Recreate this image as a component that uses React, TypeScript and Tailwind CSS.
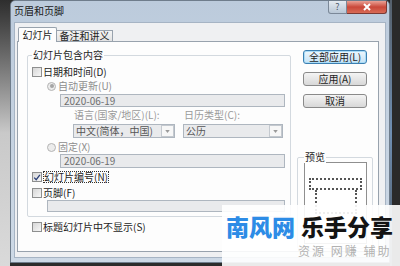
import React from "react";

const font = { fontFamily: '"Noto Sans CJK SC", "Liberation Sans", sans-serif' };

const CheckBox = ({ checked }: { checked?: boolean }) => (
  <span className="w-[10px] h-[10px] shrink-0 border border-[#8e8f8f] bg-gradient-to-br from-[#d6d6d6] to-[#f7f7f7] flex items-center justify-center">
    {checked && (
      <svg viewBox="0 0 10 10" className="w-[9px] h-[9px]">
        <path d="M1.5 5.2 L4 7.8 L8.6 1.8" fill="none" stroke="#2a3f77" strokeWidth="1.6" />
      </svg>
    )}
  </span>
);

const Radio = ({ on }: { on?: boolean }) => (
  <span className="w-[9px] h-[9px] shrink-0 rounded-full border border-[#b4b4b4] bg-[#ececec] flex items-center justify-center">
    {on && <span className="w-[4px] h-[4px] rounded-full bg-[#a5a5a5]" />}
  </span>
);

const Arrow = () => (
  <span className="w-[13px] h-[12px] border border-[#c4c9cf] bg-[#f7f7f7] flex items-center justify-center">
    <svg viewBox="0 0 6 4" className="w-[5px] h-[3px]">
      <path d="M0 0 L6 0 L3 4 Z" fill="#9a9a9a" />
    </svg>
  </span>
);

export default function App() {
  return (
    <div className="relative w-[400px] h-[266px] overflow-hidden flex bg-[#2c2c2c] text-[10px] leading-[12px] text-[#1e1e1e]" style={font}>
      {/* desk left */}
      <div className="w-[10px] h-full bg-gradient-to-b from-[#2e2e2e] via-[#c9c9c9] to-[#dadada]" />

      {/* window */}
      <div className="w-[380px] h-[263px] flex flex-col rounded-t-[5px] bg-gradient-to-b from-[#bccbdc] to-[#cdd9e6] border border-[#6f7d8c]">
        {/* title bar */}
        <div className="h-[21px] flex items-start shrink-0">
          <span className="pl-[3px] pt-[4px] text-[#1a1a1a]">页眉和页脚</span>
          <div className="flex-1" />
          <div className="w-[19px] h-[13px] flex items-center justify-center rounded-bl-[3px] border border-t-0 border-[#7b8898] bg-gradient-to-b from-[#e4eaf1] to-[#b9c7d6] text-[9px] text-[#4c5a6a]">?</div>
          <div className="w-[40px] h-[13px] mr-[2px] flex items-center justify-center rounded-br-[3px] border border-t-0 border-l-0 border-[#7b3a34] bg-gradient-to-b from-[#e9a196] via-[#c9473a] to-[#d86a55]">
            <svg viewBox="0 0 10 8" className="w-[10px] h-[8px]">
              <path d="M2 1 L8 7 M8 1 L2 7" stroke="#fff" strokeWidth="2" />
            </svg>
          </div>
        </div>

        {/* dialog body */}
        <div className="flex-1 mx-[3px] mb-[4px] bg-[#eff0f2] border border-[#a6b4c4] flex flex-col">
          {/* tabs */}
          <div className="h-[15px] mt-[4px] ml-[3px] -mb-[1px] flex items-end">
            <div className="relative z-10 w-[39px] h-[15px] bg-[#fdfdfd] border border-b-0 border-[#98a2ad] rounded-t-[2px] flex items-center justify-center">
              幻灯片
            </div>
            <div className="w-[56px] h-[11px] mb-[1px] bg-gradient-to-b from-[#f4f4f4] to-[#e2e2e2] border border-b-0 border-l-0 border-[#98a2ad] flex items-center justify-center">
              备注和讲义
            </div>
          </div>

          {/* panel */}
          <div className="ml-[2px] w-[362px] h-[211px] bg-[#fdfdfd] border border-[#98a2ad] flex">
            <div className="flex flex-col">
              {/* group box */}
              <div className="relative ml-[9px] mt-[13px] w-[264px] h-[162px] border border-[#d3d9df] rounded-[2px] flex flex-col">
                <span className="absolute -top-[7px] left-[4px] px-[1px] bg-[#fdfdfd]">幻灯片包含内容</span>

                <div className="mt-[10px] h-[12px] pl-[4px] flex items-center gap-[1px]">
                  <CheckBox />
                  <span>日期和时间(D)</span>
                </div>
                <div className="mt-[2px] h-[12px] pl-[19px] flex items-center gap-[2px] text-[#8d8d8d]">
                  <Radio on />
                  <span>自动更新(U)</span>
                </div>
                <div className="mt-[2px] ml-[32px] w-[225px] h-[13px] bg-[#e9eaec] border border-[#aeb6bf] flex items-center pl-[3px] text-[#6f6f6f]">
                  2020-06-19
                </div>
                <div className="mt-[2px] h-[12px] pl-[46px] flex items-center text-[#9a9a9a]">
                  <span className="w-[110px]">语言(国家/地区)(L):</span>
                  <span>日历类型(C):</span>
                </div>
                <div className="mt-[3px] ml-[45px] h-[14px] flex gap-[8px]">
                  <div className="w-[102px] h-[14px] bg-[#e9eaec] border border-[#aeb6bf] flex items-center justify-between pl-[2px] text-[#555]">
                    <span>中文(简体，中国)</span>
                    <Arrow />
                  </div>
                  <div className="w-[100px] h-[14px] bg-[#e9eaec] border border-[#aeb6bf] flex items-center justify-between pl-[2px] text-[#555]">
                    <span>公历</span>
                    <Arrow />
                  </div>
                </div>
                <div className="mt-[3px] h-[12px] pl-[19px] flex items-center gap-[2px] text-[#8d8d8d]">
                  <Radio />
                  <span>固定(X)</span>
                </div>
                <div className="mt-[1px] ml-[32px] w-[225px] h-[14px] bg-[#e9eaec] border border-[#aeb6bf] flex items-center pl-[3px] text-[#6f6f6f]">
                  2020-06-19
                </div>
                <div className="mt-[3px] h-[12px] pl-[4px] flex items-center gap-[1px]">
                  <CheckBox checked />
                  <span className="border border-dotted border-[#333] leading-[10px]">幻灯片编号(N)</span>
                </div>
                <div className="mt-[4px] h-[12px] pl-[4px] flex items-center gap-[1px]">
                  <CheckBox />
                  <span>页脚(F)</span>
                </div>
                <div className="mt-[1px] ml-[19px] w-[238px] h-[12px] bg-[#e9eaec] border border-[#aeb6bf]" />
              </div>

              <div className="mt-[4px] ml-[14px] h-[12px] flex items-center gap-[1px]">
                <CheckBox />
                <span>标题幻灯片中不显示(S)</span>
              </div>
            </div>

            {/* right column */}
            <div className="ml-[6px] w-[76px] flex flex-col">
              <div className="mt-[8px] ml-[6px] w-[64px] h-[14px] rounded-[3px] border border-[#3c7fb1] bg-gradient-to-b from-[#eef7fd] to-[#c6e2f5] shadow-[inset_0_0_0_1px_#a9dcf7] flex items-center justify-center">
                全部应用(L)
              </div>
              <div className="mt-[8px] ml-[6px] w-[64px] h-[14px] rounded-[3px] border border-[#8a8a8a] bg-gradient-to-b from-[#f4f4f4] to-[#d8d8d8] flex items-center justify-center">
                应用(A)
              </div>
              <div className="mt-[8px] ml-[6px] w-[64px] h-[14px] rounded-[3px] border border-[#8a8a8a] bg-gradient-to-b from-[#f4f4f4] to-[#d8d8d8] flex items-center justify-center">
                取消
              </div>

              <div className="relative mt-[49px] w-[76px] h-[92px] border border-[#d3d9df] rounded-[2px]">
                <span className="absolute -top-[7px] left-[6px] px-[1px] bg-[#fdfdfd]">预览</span>
                <div className="mt-[4px] ml-[6px] w-[63px] h-[82px] border border-[#8f8f8f] bg-white flex flex-col items-center">
                  <div className="mt-[15px] w-[53px] h-[12px] border-2 border-dotted border-[#555]" />
                  <div className="w-[42px] h-[24px] border-2 border-t-0 border-dotted border-[#555]" />
                </div>
              </div>
            </div>
          </div>
        </div>
      </div>

      {/* desk right */}
      <div className="w-[10px] h-full flex">
        <div className="w-[2px] h-full bg-gradient-to-b from-[#55606c] via-[#6f8fb3] to-[#4a5561]" />
        <div className="flex-1 h-full bg-[#2a2a2a]" />
      </div>

      {/* watermark */}
      <div className="absolute left-[222px] top-[205px] w-[178px] h-[61px] bg-white/90 flex flex-col">
        <div className="mt-[9px] ml-[4px] h-[24px] flex items-center gap-[6px] text-[23px] leading-[24px] font-black">
          <span className="text-[#2d8ce6]">南风网</span>
          <span className="text-[#141414]">乐手分享</span>
        </div>
        <div className="mt-[6px] ml-[76px] text-[12px] leading-[14px] tracking-[2px] text-[#b2b2b2]">
          资源 网赚 辅助
        </div>
      </div>
    </div>
  );
}
